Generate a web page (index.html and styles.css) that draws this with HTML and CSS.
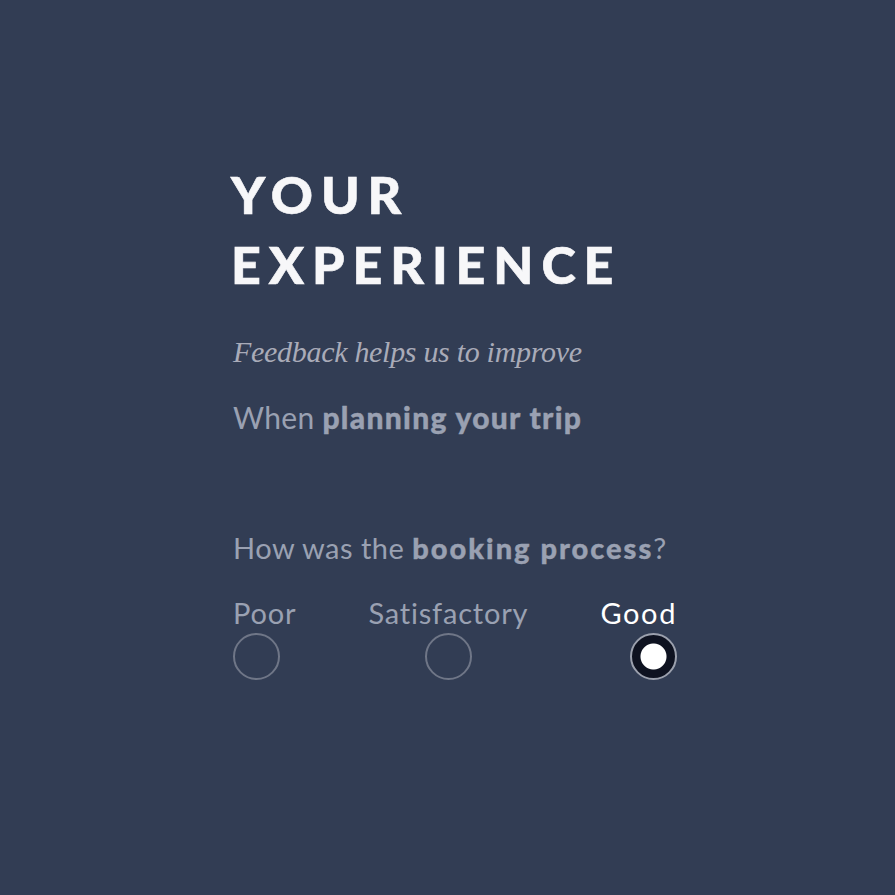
FILE: index.html
```html
<!DOCTYPE html>
<html lang="en">
<head>
<meta charset="utf-8">
<title>Your Experience</title>
<link rel="stylesheet" href="styles.css">
</head>
<body>
<main class="page">
  <section class="card">
    <h1 class="title">YOUR<br>EXPERIENCE</h1>
    <p class="subtitle">Feedback helps us to improve</p>
    <p class="context">When <strong>planning your trip</strong></p>
    <fieldset class="question">
      <legend class="prompt">How was the <strong>booking process</strong>?</legend>
      <div class="options">
        <label class="option option-start">
          <span class="option-label">Poor</span>
          <input type="radio" name="booking" class="radio">
        </label>
        <label class="option option-center">
          <span class="option-label">Satisfactory</span>
          <input type="radio" name="booking" class="radio">
        </label>
        <label class="option option-end">
          <span class="option-label">Good</span>
          <input type="radio" name="booking" class="radio" checked>
        </label>
      </div>
    </fieldset>
  </section>
</main>
</body>
</html>
```

FILE: styles.css
```css
html, body {
  margin: 0;
  padding: 0;
  background: #323d54;
}
.page {
  width: 895px;
  height: 895px;
  display: flex;
  justify-content: flex-start;
  padding-left: 231px;
  box-sizing: border-box;
}
.card {
  padding-top: 159px;
  width: 450px;
  font-family: Lato, "Noto Sans", sans-serif;
}
.title {
  margin: 0;
  color: #f7f7f9;
  font-family: Lato, sans-serif;
  font-weight: 900;
  font-size: 52px;
  line-height: 70px;
  letter-spacing: 7.9px;
  -webkit-text-stroke: 0.6px #f7f7f9;
}
.subtitle {
  margin: 33px 0 0 2px;
  font-family: "Liberation Serif", serif;
  font-style: italic;
  font-size: 30px;
  line-height: 40px;
  letter-spacing: -0.3px;
  color: #a9abb8;
}
.context {
  margin: 27px 0 0 2px;
  font-size: 30px;
  line-height: 36px;
  letter-spacing: 0.3px;
  color: #9aa1b2;
}
.context strong {
  font-weight: 900;
  letter-spacing: 1.3px;
  -webkit-text-stroke: 0.4px #9aa1b2;
}
.question {
  border: 0;
  margin: 95px 0 0 0;
  padding: 0;
  width: 446px;
}
.prompt {
  padding: 0 0 0 2px;
  font-size: 29px;
  line-height: 36px;
  letter-spacing: 0.5px;
  color: #9aa1b2;
}
.prompt strong {
  font-weight: 900;
  letter-spacing: 2px;
  -webkit-text-stroke: 0.4px #9aa1b2;
}
.options {
  display: flex;
  justify-content: space-between;
  margin-top: 29px;
}
.option {
  display: flex;
  flex-direction: column;
  gap: 2px;
}
.option-start { align-items: flex-start; }
.option-center { align-items: center; }
.option-end { align-items: flex-end; }
.option-label {
  font-size: 29px;
  line-height: 36px;
  letter-spacing: 0.8px;
  color: #9aa1b2;
  padding-left: 2px;
}
.option-end .option-label { color: #ffffff; letter-spacing: 1.6px; }
.radio {
  appearance: none;
  -webkit-appearance: none;
  margin: 0 0 0 2px;
  width: 47px;
  height: 47px;
  border-radius: 50%;
  border: 2px solid #6f7687;
  box-sizing: border-box;
  background: transparent;
}
.radio:checked {
  background: radial-gradient(circle, #ffffff 0 12.5px, #0e1220 13.5px);
  border-color: #9ba0ad;
}
```
